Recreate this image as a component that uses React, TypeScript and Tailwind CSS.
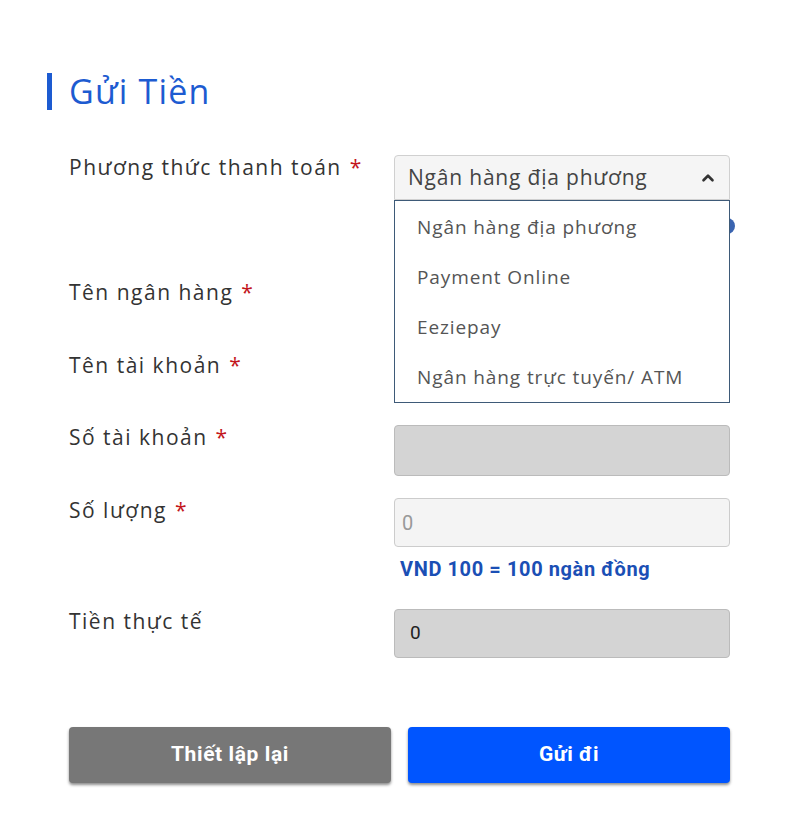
import { ChevronUp } from "lucide-react";

const labelFont = { fontFamily: '"Open Sans", "Noto Sans", sans-serif' };
const boldFont = { fontFamily: 'Roboto, "Liberation Sans", sans-serif' };

function Label({ text, required = true }: { text: string; required?: boolean }) {
  return (
    <div className="text-[21px] leading-6 text-[#333] tracking-[1.5px]" style={labelFont}>
      {text}
      {required && <span className="ml-2 text-[#c3161c]">*</span>}
    </div>
  );
}

const options = [
  "Ngân hàng địa phương",
  "Payment Online",
  "Eeziepay",
  "Ngân hàng trực tuyến/ ATM",
];

export default function App() {
  return (
    <div className="min-h-[813px] w-[800px] bg-white">
      <div className="pl-[47px] pr-[70px] pt-[73px] pb-[26px]">
        <div className="flex items-center gap-[17px]">
          <div className="h-[37px] w-[5px] bg-[#1d5bd1]" />
          <h1 className="text-[34px] leading-[37px] text-[#1d5bd1] tracking-[1.2px]" style={labelFont}>
            Gửi Tiền
          </h1>
        </div>

        <div className="ml-[22px] mt-[45px] flex flex-col">
          {/* payment method */}
          <div className="grid grid-cols-[325px_1fr]">
            <Label text="Phương thức thanh toán" />
            <div className="relative z-10">
              <div className="flex h-[45px] items-center justify-between rounded-t border border-[#d0d0d0] bg-[#f5f5f5] pl-[13px] pr-[12px]">
                <span className="text-[21px] text-[#444] tracking-[0.8px]" style={labelFont}>
                  Ngân hàng địa phương
                </span>
                <ChevronUp className="h-[18px] w-[18px] text-[#333]" strokeWidth={3.5} />
              </div>
              <ul className="absolute left-0 right-0 top-full border-[1.5px] border-[#3e5a78] bg-white pt-px">
                {options.map((o) => (
                  <li
                    key={o}
                    className="flex h-[50px] items-center pl-[22px] text-[19px] text-[#555] tracking-[0.9px]"
                    style={labelFont}
                  >
                    {o}
                  </li>
                ))}
              </ul>
              <div className="absolute right-[-5px] top-[63px] -z-10 h-[16px] w-[16px] rounded-full bg-[#3a64b0]" />
            </div>
          </div>

          <div className="mt-[80px] grid grid-cols-[325px_1fr]">
            <Label text="Tên ngân hàng" />
            <div className="h-[50px] rounded border border-[#bbb] bg-[#d4d4d4]" />
          </div>

          <div className="mt-[23px] grid grid-cols-[325px_1fr]">
            <Label text="Tên tài khoản" />
            <div className="h-[50px] rounded border border-[#bbb] bg-[#d4d4d4]" />
          </div>

          <div className="mt-[22px] grid grid-cols-[325px_1fr]">
            <Label text="Số tài khoản" />
            <div className="h-[51px] rounded border border-[#bbb] bg-[#d4d4d4]" />
          </div>

          <div className="mt-[22px] grid grid-cols-[325px_1fr]">
            <Label text="Số lượng" />
            <div>
              <div className="flex h-[49px] items-center rounded border border-[#ccc] bg-[#f4f4f4] pl-[7px]">
                <span className="text-[20px] text-[#999]" style={boldFont}>
                  0
                </span>
              </div>
              <div className="mt-[7px] pl-[6px] text-[20px] font-bold text-[#1b4fb5] tracking-[0.6px]" style={boldFont}>
                VND 100 = 100 ngàn đồng
              </div>
            </div>
          </div>

          <div className="mt-[25px] grid grid-cols-[325px_1fr]">
            <Label text="Tiền thực tế" required={false} />
            <div className="flex h-[49px] items-center rounded border border-[#bbb] bg-[#d4d4d4] pl-[15px]">
              <span className="text-[19px] text-[#222]" style={boldFont}>
                0
              </span>
            </div>
          </div>

          <div className="mt-[69px] grid grid-cols-2 gap-[17px]">
            <button
              className="h-[56px] rounded bg-[#777] text-[21px] font-bold text-white tracking-[0.6px] shadow-[0_2px_3px_rgba(0,0,0,0.45)]"
              style={boldFont}
            >
              Thiết lập lại
            </button>
            <button
              className="h-[56px] rounded bg-[#0055ff] text-[21px] font-bold text-white tracking-[0.6px] shadow-[0_2px_3px_rgba(0,0,0,0.45)]"
              style={boldFont}
            >
              Gửi đi
            </button>
          </div>
        </div>
      </div>
    </div>
  );
}
